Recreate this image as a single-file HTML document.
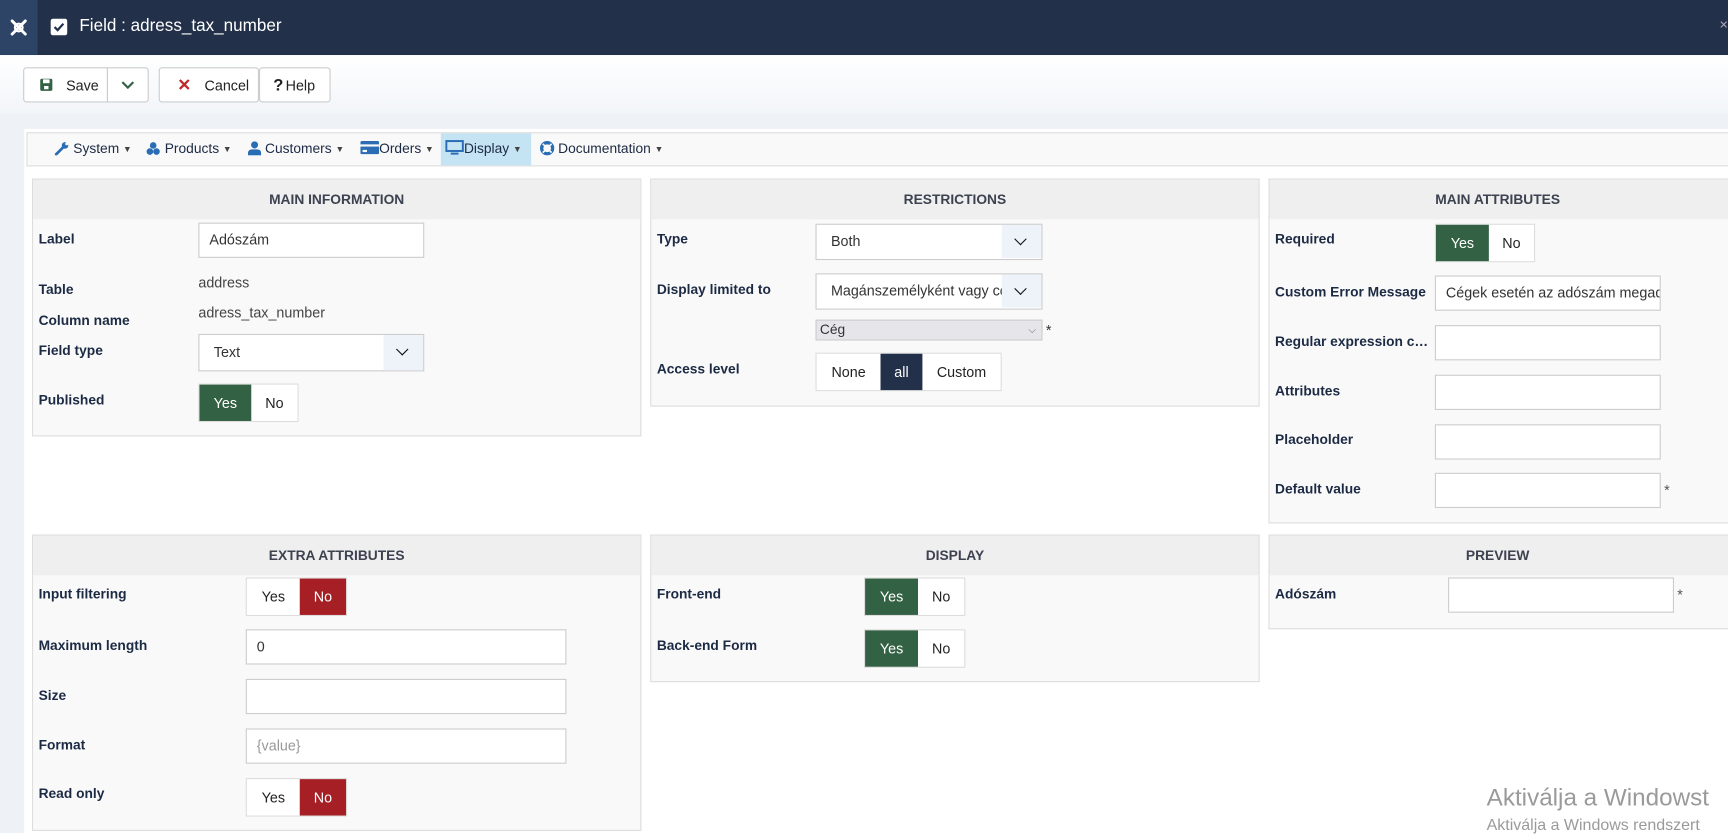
<!DOCTYPE html>
<html><head><meta charset="utf-8"><style>
*{box-sizing:border-box;margin:0;padding:0}
html,body{width:1728px;height:833px;overflow:hidden;background:#fff;font-family:"Liberation Sans",sans-serif}
#w{position:absolute;left:0;top:0;width:1568px;height:756px;transform:scale(1.10204);transform-origin:0 0;background:#fff}
.a{position:absolute}
.hdr{left:0;top:0;width:1568px;height:50px;background:#22304a}
.tb{left:0;top:50px;width:1568px;height:53px;background:linear-gradient(#fff,#f2f5f9)}
.strip{left:0;top:103px;width:22px;height:653px;background:#eef1f5}
.band{left:0;top:103px;width:1568px;height:14px;background:#eef1f5}
.btn{position:absolute;top:61px;height:32px;border:1px solid #ccc;border-radius:3px;background:#fff;font-size:13px;color:#222;display:flex;align-items:center}
.menu{left:24px;top:120px;width:1560px;height:31px;background:#f9f9f9;border:1px solid #ddd}
.mi{position:absolute;top:0;height:29px;line-height:29px;font-size:12.5px;color:#1c2a44;white-space:nowrap}
.mi i{font-style:normal;font-size:8px;color:#444;vertical-align:1px}
.p{position:absolute;background:#f9f9f9;border:1px solid #ddd}
.ph{height:36px;background:#efefef;text-align:center;line-height:36px;font-size:12.5px;font-weight:bold;color:#3d4250}
.l{position:absolute;font-size:12.5px;font-weight:bold;color:#1c2a44}
.i{position:absolute;height:32px;border:1px solid #ccc;background:#fff;font-size:13px;color:#333;line-height:30px;padding-left:9px;white-space:nowrap;overflow:hidden}
.sel .ar{position:absolute;right:0;top:0;width:36px;height:30px;background:#eef3fa}
.sel .ar:after{content:"";position:absolute;left:13px;top:9px;width:7px;height:7px;border-right:1.6px solid #111;border-bottom:1.6px solid #111;transform:rotate(45deg)}
.tg{position:absolute;height:35px;border:1px solid #ddd;background:#fff;display:flex;font-size:13px}
.tg span{display:block;line-height:33px;text-align:center;color:#222}
.g{background:#336143;color:#fff!important}
.r{background:#a51f24;color:#fff!important}
.n{background:#22304a;color:#fff!important}
.t{position:absolute;font-size:13px;color:#333}
.st{position:absolute;font-size:13px;color:#444}
</style></head><body><div id="w">
<div class="a hdr"></div>
<div class="a" style="left:0;top:0;width:34px;height:50px;background:#2d4466"></div>
<svg class="a" style="left:8px;top:16px" width="18" height="18" viewBox="0 0 18 18"><g stroke="#fff" stroke-width="2.6" fill="none" stroke-linecap="round"><path d="M3 3L15 15M15 3L3 15"/><circle cx="9" cy="9" r="3.5" stroke-width="2"/></g></svg>
<div class="a" style="left:46px;top:17px;width:15px;height:15px;background:#fff;border-radius:2px"></div>
<svg class="a" style="left:46px;top:17px" width="15" height="15"><path d="M3.5 7.5L6.3 10.3L11.5 4.5" stroke="#22304a" stroke-width="2" fill="none"/></svg>
<div class="a" style="left:72px;top:15px;font-size:15.5px;color:#fff">Field : adress_tax_number</div>
<div class="a" style="left:1560px;top:18px;width:8px;height:10px;color:#aab;font-size:10px">✕</div>
<div class="a tb"></div>
<div class="a band"></div>
<div class="a strip"></div>
<div class="btn" style="left:21px;width:77px;border-radius:3px 0 0 3px"><svg style="margin:0 12px 0 14px" width="12" height="12"><rect x="0.5" y="0.5" width="11" height="11" rx="1.5" fill="#336143"/><rect x="3" y="1" width="6" height="3.5" fill="#fff"/><rect x="4" y="7" width="4" height="3" fill="#fff"/></svg>Save</div>
<div class="btn" style="left:97px;width:38px;border-radius:0 3px 3px 0;justify-content:center"><svg width="12" height="8"><path d="M1 1.5L6 6.5L11 1.5" stroke="#336143" stroke-width="2" fill="none"/></svg></div>
<div class="btn" style="left:144px;width:91px"><span style="color:#c0262b;font-weight:bold;font-size:15px;margin:0 12px 0 16px">✕</span>Cancel</div>
<div class="btn" style="left:235px;width:65px;padding-left:12px"><b style="font-size:15px;margin-right:2px">?</b>Help</div>
<div class="a menu">
<div class="mi" style="left:24px"><svg width="14" height="13" style="vertical-align:-2px"><path d="M2 12L8 6" stroke="#2a6db5" stroke-width="2.5" stroke-linecap="round"/><circle cx="10" cy="4" r="3" fill="#2a6db5"/><circle cx="11.5" cy="2.5" r="1.3" fill="#f9f9f9"/></svg> System <i>▼</i></div>
<div class="mi" style="left:107px"><svg width="14" height="13" style="vertical-align:-2px"><circle cx="7" cy="4" r="3" fill="#2a6db5"/><circle cx="4" cy="9.5" r="3" fill="#2a6db5"/><circle cx="10" cy="9.5" r="3" fill="#2a6db5"/></svg> Products <i>▼</i></div>
<div class="mi" style="left:200px"><svg width="12" height="13" style="vertical-align:-2px"><circle cx="6" cy="3.5" r="3.2" fill="#2a6db5"/><path d="M0 13V11Q0 7.5 4 7.5H8Q12 7.5 12 11V13Z" fill="#2a6db5"/></svg> Customers <i>▼</i></div>
<div class="mi" style="left:302px"><svg width="17" height="12" style="vertical-align:-1px"><rect x="0" y="0" width="17" height="12" rx="1.5" fill="#2a6db5"/><rect x="0" y="3" width="17" height="2" fill="#f9f9f9"/><rect x="2" y="8" width="4" height="2" fill="#f9f9f9"/></svg>Orders <i>▼</i></div>
<div class="mi" style="left:375px;width:82px;background:#c4e3f3;padding-left:4px"><svg width="17" height="14" style="vertical-align:-2px"><rect x="1" y="1" width="15" height="9" fill="none" stroke="#2a6db5" stroke-width="1.8"/><rect x="5" y="11.5" width="7" height="1.8" fill="#2a6db5"/></svg>Display <i>▼</i></div>
<div class="mi" style="left:465px"><svg width="13" height="13" style="vertical-align:-2px"><circle cx="6.5" cy="6.5" r="5" fill="none" stroke="#2a6db5" stroke-width="3"/><path d="M2.5 2.5L5 5M10.5 2.5L8 5M2.5 10.5L5 8M10.5 10.5L8 8" stroke="#f9f9f9" stroke-width="1.5"/></svg> Documentation <i>▼</i></div>
</div>

<div class="p" style="left:29px;top:162px;width:553px;height:234px"><div class="ph">MAIN INFORMATION</div></div>
<div class="l" style="left:35px;top:210px">Label</div><div class="i" style="left:180px;top:202px;width:205px">Adószám</div>
<div class="l" style="left:35px;top:256px">Table</div><div class="st" style="left:180px;top:249px">address</div>
<div class="l" style="left:35px;top:284px">Column name</div><div class="st" style="left:180px;top:276px">adress_tax_number</div>
<div class="l" style="left:35px;top:311px">Field type</div><div class="i sel" style="left:180px;top:303px;width:205px;height:34px;line-height:32px;padding-left:13px">Text<div class="ar" style="height:32px"></div></div>
<div class="l" style="left:35px;top:356px">Published</div><div class="tg" style="left:180px;top:348px;width:91px"><span class="g" style="width:47px">Yes</span><span style="width:42px">No</span></div>

<div class="p" style="left:590px;top:162px;width:553px;height:207px"><div class="ph">RESTRICTIONS</div></div>
<div class="l" style="left:596px;top:210px">Type</div><div class="i sel" style="left:740px;top:203px;width:206px;height:33px;padding-left:13px">Both<div class="ar"></div></div>
<div class="l" style="left:596px;top:256px">Display limited to</div><div class="i sel" style="left:740px;top:248px;width:206px;height:33px;padding-left:13px">Magánszemélyként vagy cég<div class="ar"></div></div>
<div class="a" style="left:740px;top:290px;width:206px;height:19px;background:#e6e6ea;border:1px solid #ccc;font-size:12.5px;line-height:17px;padding-left:3px;color:#333">Cég<span style="position:absolute;right:5px;font-size:9px;color:#666">⌵</span></div>
<div class="t" style="left:949px;top:292px">*</div>
<div class="l" style="left:596px;top:328px">Access level</div>
<div class="tg" style="left:740px;top:320px;width:169px"><span style="width:58px">None</span><span class="n" style="width:38px">all</span><span style="width:71px">Custom</span></div>

<div class="p" style="left:1151px;top:162px;width:430px;height:313px"><div class="ph" style="padding-right:14px">MAIN ATTRIBUTES</div></div>
<div class="l" style="left:1157px;top:210px">Required</div><div class="tg" style="left:1302px;top:203px;width:91px;height:35px"><span class="g" style="width:48px">Yes</span><span style="width:41px">No</span></div>
<div class="l" style="left:1157px;top:258px">Custom Error Message</div><div class="i" style="left:1302px;top:250px;width:205px">Cégek esetén az adószám megadása</div>
<div class="l" style="left:1157px;top:303px;width:143px;overflow:hidden;white-space:nowrap;text-overflow:ellipsis">Regular expression check</div><div class="i" style="left:1302px;top:295px;width:205px"></div>
<div class="l" style="left:1157px;top:348px">Attributes</div><div class="i" style="left:1302px;top:340px;width:205px"></div>
<div class="l" style="left:1157px;top:392px">Placeholder</div><div class="i" style="left:1302px;top:385px;width:205px"></div>
<div class="l" style="left:1157px;top:437px">Default value</div><div class="i" style="left:1302px;top:429px;width:205px"></div><div class="t" style="left:1510px;top:437px;color:#555">*</div>

<div class="p" style="left:29px;top:485px;width:553px;height:269px"><div class="ph">EXTRA ATTRIBUTES</div></div>
<div class="l" style="left:35px;top:532px">Input filtering</div><div class="tg" style="left:223px;top:524px;width:92px"><span style="width:48px">Yes</span><span class="r" style="width:42px">No</span></div>
<div class="l" style="left:35px;top:579px">Maximum length</div><div class="i" style="left:223px;top:571px;width:291px">0</div>
<div class="l" style="left:35px;top:624px">Size</div><div class="i" style="left:223px;top:616px;width:291px"></div>
<div class="l" style="left:35px;top:669px">Format</div><div class="i" style="left:223px;top:661px;width:291px;color:#999">{value}</div>
<div class="l" style="left:35px;top:713px">Read only</div><div class="tg" style="left:223px;top:706px;width:92px"><span style="width:48px">Yes</span><span class="r" style="width:42px">No</span></div>

<div class="p" style="left:590px;top:485px;width:553px;height:134px"><div class="ph">DISPLAY</div></div>
<div class="l" style="left:596px;top:532px">Front-end</div><div class="tg" style="left:784px;top:524px;width:92px"><span class="g" style="width:48px">Yes</span><span style="width:42px">No</span></div>
<div class="l" style="left:596px;top:579px">Back-end Form</div><div class="tg" style="left:784px;top:571px;width:92px"><span class="g" style="width:48px">Yes</span><span style="width:42px">No</span></div>

<div class="p" style="left:1151px;top:485px;width:430px;height:86px"><div class="ph" style="padding-right:14px">PREVIEW</div></div>
<div class="l" style="left:1157px;top:532px">Adószám</div><div class="i" style="left:1314px;top:524px;width:205px"></div><div class="t" style="left:1522px;top:532px;color:#555">*</div>

<div class="a" style="left:1349px;top:711px;font-size:22px;color:#9a9a9a;white-space:nowrap">Aktiválja a Windowst</div>
<div class="a" style="left:1349px;top:741px;font-size:14.5px;color:#9a9a9a;white-space:nowrap">Aktiválja a Windows rendszert</div>
</div></body></html>
